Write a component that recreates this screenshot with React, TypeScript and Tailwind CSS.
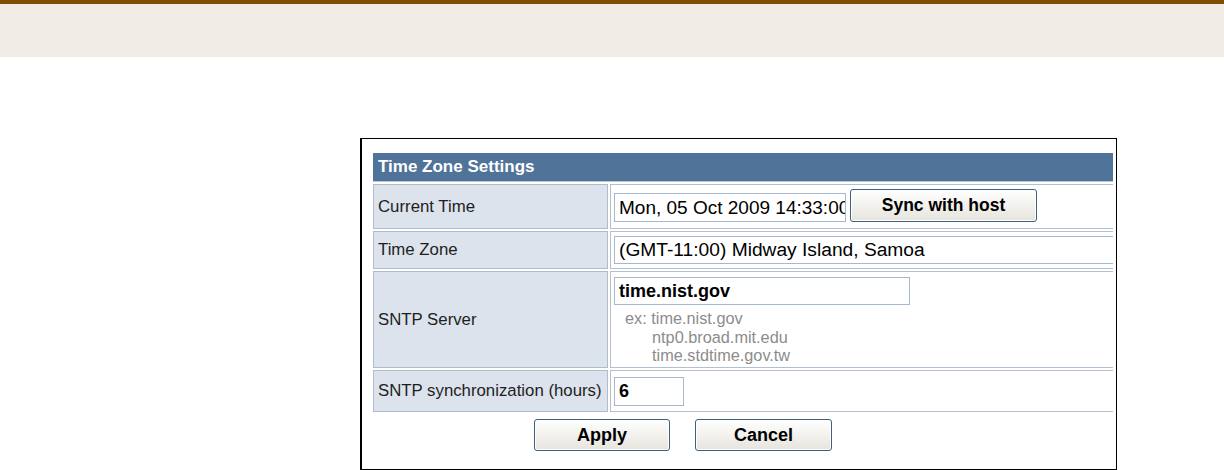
export default function App() {
  const font = { fontFamily: '"Liberation Sans", Arial, Helvetica, sans-serif' }
  const labelCls =
    'w-[235px] shrink-0 flex items-center pl-[4px] bg-[#dce3ec] border border-[#aebccd] text-[16.8px] text-[#1e1e1e]'
  const valueCls = 'flex-1 border border-r-0 border-[#b3c0d0] bg-white pl-[3px]'
  const btnCls =
    'h-[32px] rounded-[3px] border border-[#3f5f82] bg-gradient-to-b from-white to-[#e6e4dc] font-bold text-black shadow-[inset_0_0_0_1px_#ffffff]'

  return (
    <div className="w-[1224px] h-[470px] overflow-hidden bg-white" style={font}>
      <div className="h-[4px] bg-[#7f5000]" />
      <div className="h-[53px] bg-[#f1ece6]" />

      <div className="ml-[360px] mt-[81px] w-[757px] h-[332px] border border-black border-l-2 pl-[11px] pt-[14px]">
        <div className="w-[740px] overflow-hidden flex flex-col gap-[2px]">
          <div className="h-[29px] bg-[#4f7399] border-b border-[#b9c6d5] flex items-center pl-[5px] text-white font-bold text-[17px]">
            Time Zone Settings
          </div>

          <div className="flex gap-[2px] h-[45px]">
            <div className={labelCls}>Current Time</div>
            <div className={valueCls + ' flex items-end pb-[6px] gap-[4px]'}>
              <input
                readOnly
                value="Mon, 05 Oct 2009 14:33:00"
                className="w-[232px] h-[29px] border border-[#a5b8cf] pl-[4px] text-[19px] text-black outline-none"
              />
              <button className={btnCls + ' w-[187px] h-[33px] text-[17.5px]'}>Sync with host</button>
            </div>
          </div>

          <div className="flex gap-[2px] h-[38px]">
            <div className={labelCls}>Time Zone</div>
            <div className={valueCls + ' flex items-center'}>
              <div className="w-[600px] shrink-0 h-[28px] border border-[#a5b8cf] pl-[4px] flex items-center text-[19.2px] text-black">
                (GMT-11:00) Midway Island, Samoa
              </div>
            </div>
          </div>

          <div className="flex gap-[2px] h-[97px]">
            <div className={labelCls}>SNTP Server</div>
            <div className={valueCls + ' pt-[5px]'}>
              <input
                readOnly
                value="time.nist.gov"
                className="w-[296px] h-[28px] border border-[#a5b8cf] pl-[4px] text-[18px] font-bold text-black outline-none"
              />
              <div className="pl-[11px] pt-[4px] text-[16.3px] leading-[18.5px] text-[#8c8c8c]">
                <div>ex: time.nist.gov</div>
                <div className="pl-[27px]">ntp0.broad.mit.edu</div>
                <div className="pl-[27px]">time.stdtime.gov.tw</div>
              </div>
            </div>
          </div>

          <div className="flex gap-[2px] h-[42px]">
            <div className={labelCls}>SNTP synchronization (hours)</div>
            <div className={valueCls + ' flex items-center'}>
              <input
                readOnly
                value="6"
                className="w-[70px] h-[29px] border border-[#a5b8cf] pl-[4px] text-[18px] font-bold text-black outline-none"
              />
            </div>
          </div>

          <div className="flex gap-[25px] pl-[161px] mt-[5px]">
            <button className={btnCls + ' w-[136px] text-[18px]'}>Apply</button>
            <button className={btnCls + ' w-[137px] text-[18px]'}>Cancel</button>
          </div>
        </div>
      </div>
    </div>
  )
}
